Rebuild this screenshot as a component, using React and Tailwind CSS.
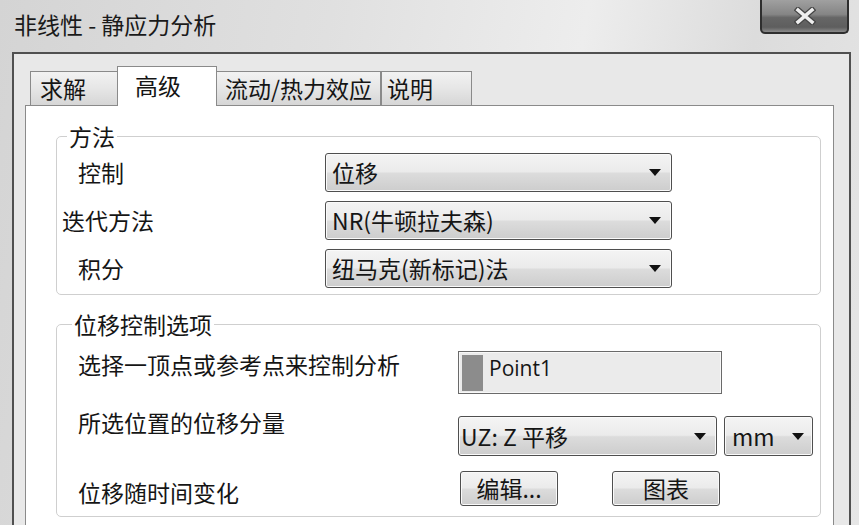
import { useState } from 'react';

// Win7-style grayscale dialog: 非线性 - 静应力分析, "高级" tab open.

const FONT = "font-['Noto_Sans_CJK_SC','Noto_Sans',sans-serif]";

const Arrow = () => (
  <svg width="12" height="7" viewBox="0 0 12 7" className="shrink-0">
    <path d="M0 0 H12 L6 7 Z" fill="#111" />
  </svg>
);

const Dropdown = ({ value, className = '', textPad = 'pl-[6px]', arrowPad = 'pr-[10px]' }) => (
  <div
    className={`flex items-center justify-between rounded-[3px] border border-[#4f4f4f] bg-[linear-gradient(#f4f4f4,#ebebeb_48%,#dcdcdc_52%,#cdcdcd)] shadow-[inset_0_0_0_1px_#fafafa] ${textPad} ${arrowPad} ${className}`}
  >
    <span className="text-[23px] leading-[23px] text-[#151515] whitespace-nowrap">{value}</span>
    <Arrow />
  </div>
);

const Button = ({ label, className = '' }) => (
  <button
    type="button"
    className={`flex items-center justify-center rounded-[3px] border border-[#4f4f4f] bg-[linear-gradient(#f4f4f4,#ebebeb_48%,#dcdcdc_52%,#cdcdcd)] shadow-[inset_0_0_0_1px_#fafafa] text-[23px] leading-[23px] text-[#151515] ${className}`}
  >
    {label}
  </button>
);

const tabs = [
  { id: 'solve', label: '求解', w: 'w-[88px]', pad: 'pl-[9px]' },
  { id: 'adv', label: '高级', w: 'w-[100px]', pad: 'pl-[17px]' },
  { id: 'flow', label: '流动/热力效应', w: 'w-[165px]', pad: 'pl-[8px]' },
  { id: 'note', label: '说明', w: 'w-[91px]', pad: 'pl-[5px]' },
];

export default function App() {
  const [active, setActive] = useState('adv');

  return (
    <div
      className={`${FONT} w-[859px] h-[525px] overflow-hidden bg-[linear-gradient(100deg,#d4d4d4,#e0e0e0_35%,#ededed_62%,#dcdcdc_80%,#e6e6e6)] text-[#151515]`}
    >
      {/* title bar */}
      <div className="flex h-[52px] items-start justify-between">
        <span className="pl-[14px] pt-[13px] text-[23px] leading-[23px] text-[#1a1a1a]">
          非线性 - 静应力分析
        </span>
        <button
          type="button"
          className="mr-[10px] flex h-[34px] w-[89px] items-center justify-center rounded-b-[5px] border-2 border-t-0 border-[#2e2e2e] bg-[linear-gradient(#a0a0a0,#858585_45%,#666666_55%,#5e5e5e_85%,#8a8a8a)]"
        >
          <svg width="22" height="18" viewBox="0 0 22 18">
            <path d="M4 3 L18 15 M18 3 L4 15" stroke="#454545" strokeWidth="6" strokeLinecap="square" />
            <path d="M4 3 L18 15 M18 3 L4 15" stroke="#eeeeee" strokeWidth="3.5" strokeLinecap="square" />
          </svg>
        </button>
      </div>

      {/* dialog frame */}
      <div className="ml-[12px] flex h-[473px] w-[839px] flex-col border-x-2 border-t-2 border-[#505050] bg-[#e8e8e8] pl-[11px] pr-[15px] pt-[12px]">
        {/* tabs */}
        <div className="relative z-10 flex h-[39px] items-end pl-[5px]">
          {tabs.map((t) => {
            const on = t.id === active;
            return (
              <button
                key={t.id}
                type="button"
                onClick={() => setActive(t.id)}
                className={`${t.w} ${t.pad} flex items-center border-x border-t border-[#8a8a8a] text-left text-[23px] leading-[23px] ${
                  on
                    ? 'h-[40px] -mb-px -mx-px bg-white pb-[2px]'
                    : 'h-[34px] bg-[linear-gradient(#f2f2f2,#e6e6e6_50%,#d6d6d6)]'
                }`}
              >
                {t.label}
              </button>
            );
          })}
        </div>

        {/* tab panel */}
        <div className="flex-1 border-x border-t border-[#8a8a8a] bg-white">
          <fieldset className="ml-[30px] mr-[12px] mt-[19px] rounded-[5px] border border-[#cfcfcf] pb-[6px] pt-[5px]">
            <legend className="ml-[10px] px-[2px] text-[23px] leading-[23px]">方法</legend>
            <div className="flex flex-col gap-[9px]">
              <div className="flex h-[39px] items-center">
                <span className="w-[268px] pl-[21px] text-[23px] leading-[23px]">控制</span>
                <Dropdown value="位移" className="h-[39px] w-[347px]" />
              </div>
              <div className="flex h-[39px] items-center">
                <span className="w-[268px] pl-[5px] text-[23px] leading-[23px]">迭代方法</span>
                <Dropdown value="NR(牛顿拉夫森)" className="h-[39px] w-[347px]" />
              </div>
              <div className="flex h-[39px] items-center">
                <span className="w-[268px] pl-[21px] text-[23px] leading-[23px]">积分</span>
                <Dropdown value="纽马克(新标记)法" className="h-[39px] w-[347px]" />
              </div>
            </div>
          </fieldset>

          <fieldset className="ml-[30px] mr-[12px] mt-[18px] rounded-[5px] border border-[#cfcfcf] pb-[10px] pt-[15px]">
            <legend className="ml-[15px] px-[2px] text-[23px] leading-[23px]">位移控制选项</legend>

            <div className="flex h-[43px] items-start">
              <span className="mt-[2px] w-[401px] pl-[21px] text-[23px] leading-[23px]">
                选择一顶点或参考点来控制分析
              </span>
              <div className="flex h-[43px] w-[264px] items-center border border-[#6a6a6a] bg-[#ebebeb] shadow-[inset_0_0_0_1px_#f8f8f8] pl-[3px]">
                <div className="h-[36px] w-[21px] bg-[#8c8c8c]" />
                <span className="mb-[9px] ml-[6px] text-[21px] leading-[21px] font-['Open_Sans',sans-serif]">
                  Point1
                </span>
              </div>
            </div>

            <div className="mt-[22px] flex h-[40px] items-start">
              <span className="-mt-[5px] w-[401px] pl-[21px] text-[23px] leading-[23px]">
                所选位置的位移分量
              </span>
              <div className="flex gap-[7px]">
                <Dropdown value="UZ: Z 平移" className="h-[40px] w-[259px]" textPad="pl-[2px]" />
                <Dropdown value="mm" className="h-[40px] w-[89px]" textPad="pl-[7px]" arrowPad="pr-[8px]" />
              </div>
            </div>

            <div className="mt-[15px] flex h-[35px] items-start">
              <span className="mt-[10px] w-[403px] pl-[21px] text-[23px] leading-[23px]">
                位移随时间变化
              </span>
              <Button label="编辑..." className="h-[35px] w-[98px]" />
              <Button label="图表" className="ml-[54px] h-[35px] w-[108px]" />
            </div>
          </fieldset>
        </div>
      </div>
    </div>
  );
}
